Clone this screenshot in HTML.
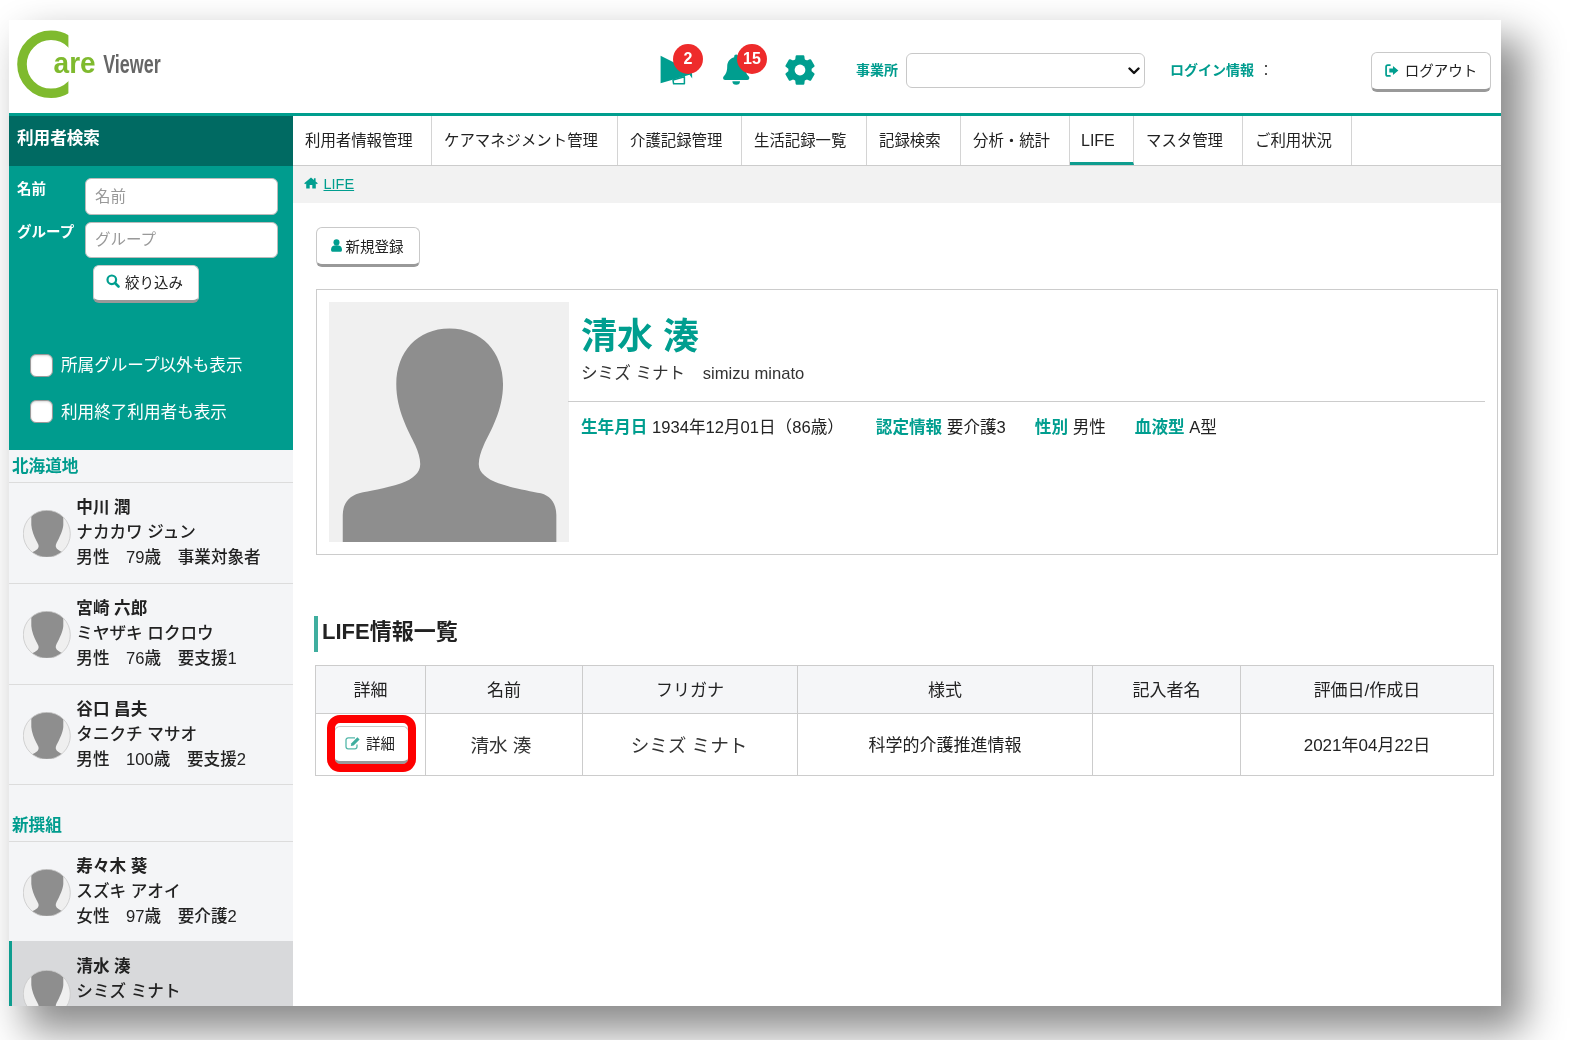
<!DOCTYPE html>
<html lang="ja">
<head>
<meta charset="utf-8">
<title>CareViewer LIFE</title>
<style>
*{box-sizing:border-box;margin:0;padding:0}
html,body{width:1586px;height:1040px;overflow:hidden;background:#fff}
body{font-family:"Liberation Sans","Noto Sans CJK JP",sans-serif;color:#222;font-size:14px;position:relative}
#shadow{position:absolute;left:9px;top:20px;width:1492px;height:986px;background:#fff;box-shadow:20px 22px 38px 3px rgba(0,0,0,.46)}
#page{position:absolute;left:9px;top:20px;width:1492px;height:986px;background:#fff;overflow:hidden}
#abs{position:absolute;left:-9px;top:-20px;width:1586px;height:1040px;will-change:transform}
#abs>*{position:absolute}
.teal{color:#009c8e}
/* header */
#hline{left:9px;top:113px;width:1492px;height:3px;background:#009e8e}
.badge{width:30px;height:30px;border-radius:50%;background:#ee2b2b;color:#fff;font-weight:bold;font-size:16px;text-align:center;line-height:30px}
.lbl{font-weight:bold;color:#009c8e;font-size:14px;white-space:nowrap}
#sel{left:906px;top:53px;width:239px;height:35px;border:1px solid #c8c8c8;border-radius:6px;background:#fff}
.btn{background:#fff;border:1px solid #c9c9c9;border-bottom:3px solid #999;border-radius:6px;white-space:nowrap;color:#222;font-size:14.5px;display:flex;align-items:center;justify-content:center}
/* nav */
#nav{left:293px;top:116px;width:1208px;height:50px;border-bottom:1px solid #ccc;background:#fff}
.tab{position:absolute;top:0;height:49px;border-right:1px solid #d4d4d4;font-size:15.4px;line-height:50px;text-align:left;padding-left:12px;color:#222;white-space:nowrap}
.tab.on{border-bottom:3px solid #0e9d8f}
/* sidebar */
#sbt{left:9px;top:116px;width:284px;height:50px;background:#006a62;color:#fff;font-weight:bold;font-size:16.6px;line-height:46px;padding-left:8px}
#sbb{left:9px;top:166px;width:284px;height:284px;background:#009c8e}
.inp{background:#fff;border:1px solid #bbb;border-radius:6px;color:#999;font-size:15.5px;padding-left:9px;line-height:33px;height:36px;width:193px}
.wl{color:#fff;font-weight:bold;font-size:14.5px;line-height:22px;white-space:nowrap}
.cb{width:23px;height:23px;background:#fff;border:1.5px solid #9a9a9a;border-radius:6px;box-shadow:inset 0 1px 2px rgba(0,0,0,.15)}
.ct{color:#fff;font-size:16.6px;white-space:nowrap;line-height:24px}
#sbl{left:9px;top:450px;width:284px;height:556px;background:#f4f5f7}
.grp{left:12px;color:#009c8e;font-weight:bold;font-size:16.6px;line-height:24px;white-space:nowrap}
.hr{left:9px;width:284px;height:1px;background:#dcdcdc}
.usr{left:9px;width:284px;height:100px}
.usr .av{position:absolute;left:14.300px;top:27.700px;width:47.600px;height:47.600px}
.usr.sel .av{left:11.300px;top:28.500px}
.usr.sel .tx{left:64.3px}
.usr .tx{font-weight:500;position:absolute;left:67.3px;top:12.7px;font-size:16.6px;line-height:25px;white-space:nowrap;color:#222}
.usr .tx b{font-weight:bold}
/* main */
#bc{left:293px;top:166px;width:1208px;height:37px;background:#f2f2f2}
#card{left:316px;top:289px;width:1182px;height:266px;border:1px solid #ccc;background:#fff}
#photo{left:329px;top:302px;width:240px;height:240px;background:#f0f0f0}
table{border-collapse:collapse}
#tbl{left:315px;top:665px}
#tbl td,#tbl th{border:1px solid #ccc;text-align:center;font-size:17px;font-weight:normal;color:#222;white-space:nowrap}
#tbl th{background:#f5f6f8;height:48px;padding-bottom:3px}
#tbl td{height:62px;padding-bottom:3px}
.blur{filter:blur(.7px);font-size:18.6px;color:#333}
#info b{color:#009e8f}
</style>
</head>
<body>
<div id="shadow"></div>
<div id="page"><div id="abs">

<!-- HEADER -->
<svg style="left:9px;top:24px" width="180" height="86" viewBox="9 24 180 86">
  <defs><clipPath id="cc"><rect x="0" y="0" width="68.4" height="120"/></clipPath></defs>
  <circle cx="51" cy="64.3" r="29" fill="none" stroke="#7fba2e" stroke-width="9.6" clip-path="url(#cc)"/>
  <text x="53.6" y="73.2" font-family="Liberation Sans, sans-serif" font-weight="bold" font-size="29" fill="#7fba2e" textLength="42" lengthAdjust="spacingAndGlyphs">are</text>
  <text x="103.2" y="72.8" font-family="Liberation Sans, sans-serif" font-weight="bold" font-size="26" fill="#666" textLength="57.5" lengthAdjust="spacingAndGlyphs">Viewer</text>
</svg>
<div id="hline"></div>
<!-- megaphone -->
<svg style="left:656px;top:50px" width="44" height="40" viewBox="656 50 44 40">
  <path d="M660.600 55.800 L692 71.500 L692.200 78.600 L689.600 74.800 L660.600 83.200Z" fill="#009e8f"/>
  <path d="M673 80 L684.400 76.700 L684.400 83.800 L673.600 83.800Z" fill="#fff" stroke="#009e8f" stroke-width="1.500" stroke-linejoin="round"/>
</svg>
<div class="badge" style="left:673px;top:44px">2</div>
<!-- bell -->
<svg style="left:718px;top:50px" width="40" height="40" viewBox="718 50 40 40">
  <path d="M736.2 54.6c-1.2 0-2 .9-2 2v.7c-4.300 1-7 4.600-7 9.200 0 5.500-1.700 8-3.400 9.800-.5.500-.7 1.100-.7 1.600 0 1 .8 2 2 2h22.200c1.200 0 2-1 2-2 0-.5-.2-1.100-.7-1.600-1.700-1.800-3.400-4.300-3.400-9.800 0-4.600-2.700-8.200-7-9.200v-.7c0-1.100-.8-2-2-2z" fill="#009e8f"/>
  <path d="M732.400 81.200a3.800 3.600 0 0 0 7.600 0z" fill="#009e8f"/>
</svg>
<div class="badge" style="left:737px;top:44px">15</div>
<!-- gear -->
<svg style="left:782.500px;top:53px" width="34" height="34" viewBox="-17 -17 34 34">
  <path d="M-3.73 -9.92 L-3.28 -13.71 L3.28 -13.71 L3.73 -9.92 L6.72 -8.19 L10.23 -9.70 L13.52 -4.01 L10.46 -1.73 L10.46 1.73 L13.52 4.01 L10.23 9.70 L6.72 8.19 L3.73 9.92 L3.28 13.71 L-3.28 13.71 L-3.73 9.92 L-6.72 8.19 L-10.23 9.70 L-13.52 4.01 L-10.46 1.73 L-10.46 -1.73 L-13.52 -4.01 L-10.23 -9.70 L-6.72 -8.19Z" fill="#009e8f" stroke="#009e8f" stroke-width="2.200" stroke-linejoin="round"/>
  <circle r="11.200" fill="#009e8f"/>
  <circle r="5.400" fill="#fff"/>
</svg>
<div class="lbl" style="left:856px;top:59px">事業所</div>
<div id="sel"><svg style="position:absolute;left:221px;top:12px" width="12" height="10" viewBox="0 0 12 10"><path d="M1.500 2.500 L6 7 L10.500 2.500" fill="none" stroke="#111" stroke-width="2.400" stroke-linecap="round" stroke-linejoin="round"/></svg></div>
<div class="lbl" style="left:1170px;top:59px">ログイン情報 <span style="color:#333;font-weight:normal;margin-left:1px">：</span></div>
<div class="btn" style="left:1371px;top:52px;width:120px;height:40px;padding-bottom:4px"><svg width="14" height="13" viewBox="0 0 13 12" style="margin-right:6px;margin-top:3px"><path d="M4.600 1H2.600a1.600 1.600 0 0 0-1.600 1.600v6.800a1.600 1.600 0 0 0 1.600 1.600h2" fill="none" stroke="#009e8f" stroke-width="1.600" stroke-linecap="round"/><path d="M7.400 1.800 L12.400 6 L7.400 10.200 V7.800 H4 V4.200 H7.400Z" fill="#009e8f"/></svg>ログアウト</div>

<!-- NAV -->
<div id="nav">
  <div class="tab" style="left:0;width:139px">利用者情報管理</div>
  <div class="tab" style="left:139px;width:186px">ケアマネジメント管理</div>
  <div class="tab" style="left:325px;width:124px">介護記録管理</div>
  <div class="tab" style="left:449px;width:125px">生活記録一覧</div>
  <div class="tab" style="left:574px;width:94px">記録検索</div>
  <div class="tab" style="left:668px;width:109px">分析・統計</div>
  <div class="tab on" style="left:777px;width:64px;font-size:16px;padding-left:11px">LIFE</div>
  <div class="tab" style="left:841px;width:109px">マスタ管理</div>
  <div class="tab" style="left:950px;width:109px">ご利用状況</div>
</div>

<!-- SIDEBAR -->
<div id="sbt">利用者検索</div>
<div id="sbb"></div>
<div class="wl" style="left:17px;top:178px">名前</div>
<div class="inp" style="left:85px;top:178px;height:37px;line-height:35px">名前</div>
<div class="wl" style="left:17px;top:221px">グループ</div>
<div class="inp" style="left:85px;top:222px">グループ</div>
<div class="btn" style="left:93px;top:265px;width:106px;height:38px;padding-bottom:4px;padding-right:3px"><svg width="14" height="14" viewBox="0 0 14 14" style="margin-right:5px"><circle cx="5.800" cy="5.800" r="4.300" fill="none" stroke="#009e8f" stroke-width="2.200"/><path d="M9 9 L12.500 12.500" stroke="#009e8f" stroke-width="2.600" stroke-linecap="round"/></svg>絞り込み</div>
<div class="cb" style="left:30px;top:354px"></div>
<div class="ct" style="left:61px;top:353.5px">所属グループ以外も表示</div>
<div class="cb" style="left:30px;top:400px"></div>
<div class="ct" style="left:61px;top:400.5px">利用終了利用者も表示</div>
<div id="sbl"></div>
<div class="grp" style="top:454.5px">北海道地</div>
<div class="hr" style="top:482px"></div>
<div class="usr" style="top:482px"><svg class="av" viewBox="0 0 47 47"><defs><clipPath id="avc"><circle cx="23.5" cy="23.5" r="23.2"/></clipPath></defs><circle cx="23.5" cy="23.5" r="23.2" fill="#efefef"/><path clip-path="url(#avc)" d="M8.200 -2 L8.200 14.800 C8.500 20 11 26 13.200 30.400 C14.500 33 15.800 34.500 15.300 36.500 C14.800 38.500 13 40 8 42.300 L8 48 L40 48 L40 42 C35.500 40 33 38.500 32.500 36.500 C32 34.500 33 33 33.900 31.200 C36 27 39.500 20 39.800 14.800 L39.800 -2 Z" fill="#8e8e8e"/><circle cx="23.5" cy="23.5" r="23.200" fill="none" stroke="#c8c8c8" stroke-width=".800"/></svg><div class="tx"><b>中川 潤</b><br>ナカカワ ジュン<br>男性　79歳　事業対象者</div></div>
<div class="hr" style="top:583px"></div>
<div class="usr" style="top:583px"><svg class="av" viewBox="0 0 47 47"><circle cx="23.5" cy="23.5" r="23.2" fill="#efefef"/><path clip-path="url(#avc)" d="M8.200 -2 L8.200 14.800 C8.500 20 11 26 13.200 30.400 C14.500 33 15.800 34.500 15.300 36.500 C14.800 38.500 13 40 8 42.300 L8 48 L40 48 L40 42 C35.500 40 33 38.500 32.500 36.500 C32 34.500 33 33 33.900 31.200 C36 27 39.500 20 39.800 14.800 L39.800 -2 Z" fill="#8e8e8e"/><circle cx="23.5" cy="23.5" r="23.200" fill="none" stroke="#c8c8c8" stroke-width=".800"/></svg><div class="tx"><b>宮崎 六郎</b><br>ミヤザキ ロクロウ<br>男性　76歳　要支援1</div></div>
<div class="hr" style="top:684px"></div>
<div class="usr" style="top:684px"><svg class="av" viewBox="0 0 47 47"><circle cx="23.5" cy="23.5" r="23.2" fill="#efefef"/><path clip-path="url(#avc)" d="M8.200 -2 L8.200 14.800 C8.500 20 11 26 13.200 30.400 C14.500 33 15.800 34.500 15.300 36.500 C14.800 38.500 13 40 8 42.300 L8 48 L40 48 L40 42 C35.500 40 33 38.500 32.500 36.500 C32 34.500 33 33 33.900 31.200 C36 27 39.500 20 39.800 14.800 L39.800 -2 Z" fill="#8e8e8e"/><circle cx="23.5" cy="23.5" r="23.200" fill="none" stroke="#c8c8c8" stroke-width=".800"/></svg><div class="tx"><b>谷口 昌夫</b><br>タニクチ マサオ<br>男性　100歳　要支援2</div></div>
<div class="hr" style="top:784px"></div>
<div class="grp" style="top:813.5px">新撰組</div>
<div class="hr" style="top:841px"></div>
<div class="usr" style="top:841px"><svg class="av" viewBox="0 0 47 47"><circle cx="23.5" cy="23.5" r="23.2" fill="#efefef"/><path clip-path="url(#avc)" d="M8.200 -2 L8.200 14.800 C8.500 20 11 26 13.200 30.400 C14.500 33 15.800 34.500 15.300 36.500 C14.800 38.500 13 40 8 42.300 L8 48 L40 48 L40 42 C35.500 40 33 38.500 32.500 36.500 C32 34.500 33 33 33.900 31.200 C36 27 39.500 20 39.800 14.800 L39.800 -2 Z" fill="#8e8e8e"/><circle cx="23.5" cy="23.5" r="23.200" fill="none" stroke="#c8c8c8" stroke-width=".800"/></svg><div class="tx"><b>寿々木 葵</b><br>スズキ アオイ<br>女性　97歳　要介護2</div></div>
<div class="usr sel" style="top:941px;background:#d8d9db;border-left:3px solid #0e9d8f;height:70px"><svg class="av" viewBox="0 0 47 47"><circle cx="23.5" cy="23.5" r="23.2" fill="#efefef"/><path clip-path="url(#avc)" d="M8.200 -2 L8.200 14.800 C8.500 20 11 26 13.200 30.400 C14.500 33 15.800 34.500 15.300 36.500 C14.800 38.500 13 40 8 42.300 L8 48 L40 48 L40 42 C35.500 40 33 38.500 32.500 36.500 C32 34.500 33 33 33.900 31.200 C36 27 39.500 20 39.800 14.800 L39.800 -2 Z" fill="#8e8e8e"/><circle cx="23.5" cy="23.5" r="23.200" fill="none" stroke="#c8c8c8" stroke-width=".800"/></svg><div class="tx"><b>清水 湊</b><br>シミズ ミナト<br>男性　86歳　要介護3</div></div>

<!-- MAIN -->
<div id="bc"></div>
<svg style="left:304px;top:177px" width="14" height="12" viewBox="0 0 14 12"><path d="M7 .600 L.200 6.300 L1.100 7.300 L2.200 6.400 V11.600 H5.700 V8 H8.300 V11.600 H11.800 V6.400 L12.900 7.300 L13.800 6.300 L11.600 4.400 V1.300 H9.900 V3 Z" fill="#009e8f"/></svg>
<div style="left:323.5px;top:173.5px;font-size:14.5px;line-height:20px;color:#009e8f;text-decoration:underline;white-space:nowrap">LIFE</div>
<div class="btn" style="left:316px;top:227px;width:104px;height:40px;padding-bottom:2px;padding-right:2px"><svg width="11" height="13" viewBox="0 0 12 14" style="margin-right:4px"><circle cx="6" cy="3.600" r="3.300" fill="#009e8f"/><path d="M0 11.500 C0 8 2 6.600 6 6.600 S12 8 12 11.500 C12 13.200 11 13.800 9.500 13.800 H2.500 C1 13.800 0 13.200 0 11.500Z" fill="#009e8f"/></svg>新規登録</div>
<div id="card"></div>
<div id="photo"><svg width="240" height="240" viewBox="0 0 239 239" style="display:block"><path d="M120 26.500 C88 26.500 67 50 67 82 C67 108 79 128 86 143 C89 150 91 156 90.800 162 C90.500 170 84 176 72 180.500 C55 186 40 188 30 190.500 C20 193.500 14 200 13.700 212 L13.700 239 L226.400 239 L226.400 212 C226 200 221 193.500 211 190.500 C200 188 185 186 168.700 180.500 C157 176 149.500 170 149.200 162 C149 156 151 150 154 143 C161 128 173.300 108 173.300 82 C173.300 50 152 26.500 120 26.500 Z" fill="#8e8e8e"/></svg></div>
<div style="left:581px;top:313px;font-size:36px;line-height:48px;font-weight:bold;color:#009e8f;white-space:nowrap">清水 湊</div>
<div style="left:581px;top:362px;font-size:16.6px;line-height:24px;color:#333;white-space:nowrap">シミズ ミナト　<span style="margin-left:1px">simizu minato</span></div>
<div style="left:568px;top:401px;width:917px;height:1px;background:#ccc"></div>
<div id="info" style="left:581px;top:416px;font-size:16.6px;line-height:24px;color:#222;white-space:nowrap"><b>生年月日</b> 1934年12月01日（86歳）<b style="margin-left:32px">認定情報</b> 要介護3<b style="margin-left:29px">性別</b> 男性<b style="margin-left:29px">血液型</b> A型</div>
<div style="left:314px;top:616px;width:4px;height:36px;background:#3fae9f"></div>
<div style="left:322px;top:616px;font-size:22px;line-height:32px;font-weight:bold;color:#222;white-space:nowrap">LIFE情報一覧</div>
<table id="tbl">
<tr><th style="width:110px">詳細</th><th style="width:157px">名前</th><th style="width:215px">フリガナ</th><th style="width:295px">様式</th><th style="width:148px">記入者名</th><th style="width:253px">評価日/作成日</th></tr>
<tr><td></td><td><span class="blur" style="position:relative;left:-3px">清水 湊</span></td><td><span class="blur" style="position:relative;left:-1px">シミズ ミナト</span></td><td>科学的介護推進情報</td><td></td><td>2021年04月22日</td></tr>
</table>
<div class="btn" style="left:334px;top:726px;width:75px;height:38px;font-size:14.4px;padding-bottom:3px;padding-right:3px"><svg width="16" height="14" viewBox="0 0 16 14" style="margin-right:5px"><path d="M10 1.800 H3.200 a2.200 2.200 0 0 0 -2.200 2.200 v6.600 a2.200 2.200 0 0 0 2.200 2.200 h6.600 a2.200 2.200 0 0 0 2.200 -2.200 V8.400" fill="none" stroke="#55b8aa" stroke-width="1.300"/><path d="M5.800 10 L6.400 7.200 L12.400 1.200 L14.600 3.400 L8.600 9.400 Z" fill="#3fae9f"/></svg>詳細</div>
<div style="left:327px;top:715px;width:89px;height:57px;border:8px solid #fe0000;border-radius:13px"></div>

</div></div>
</body>
</html>
